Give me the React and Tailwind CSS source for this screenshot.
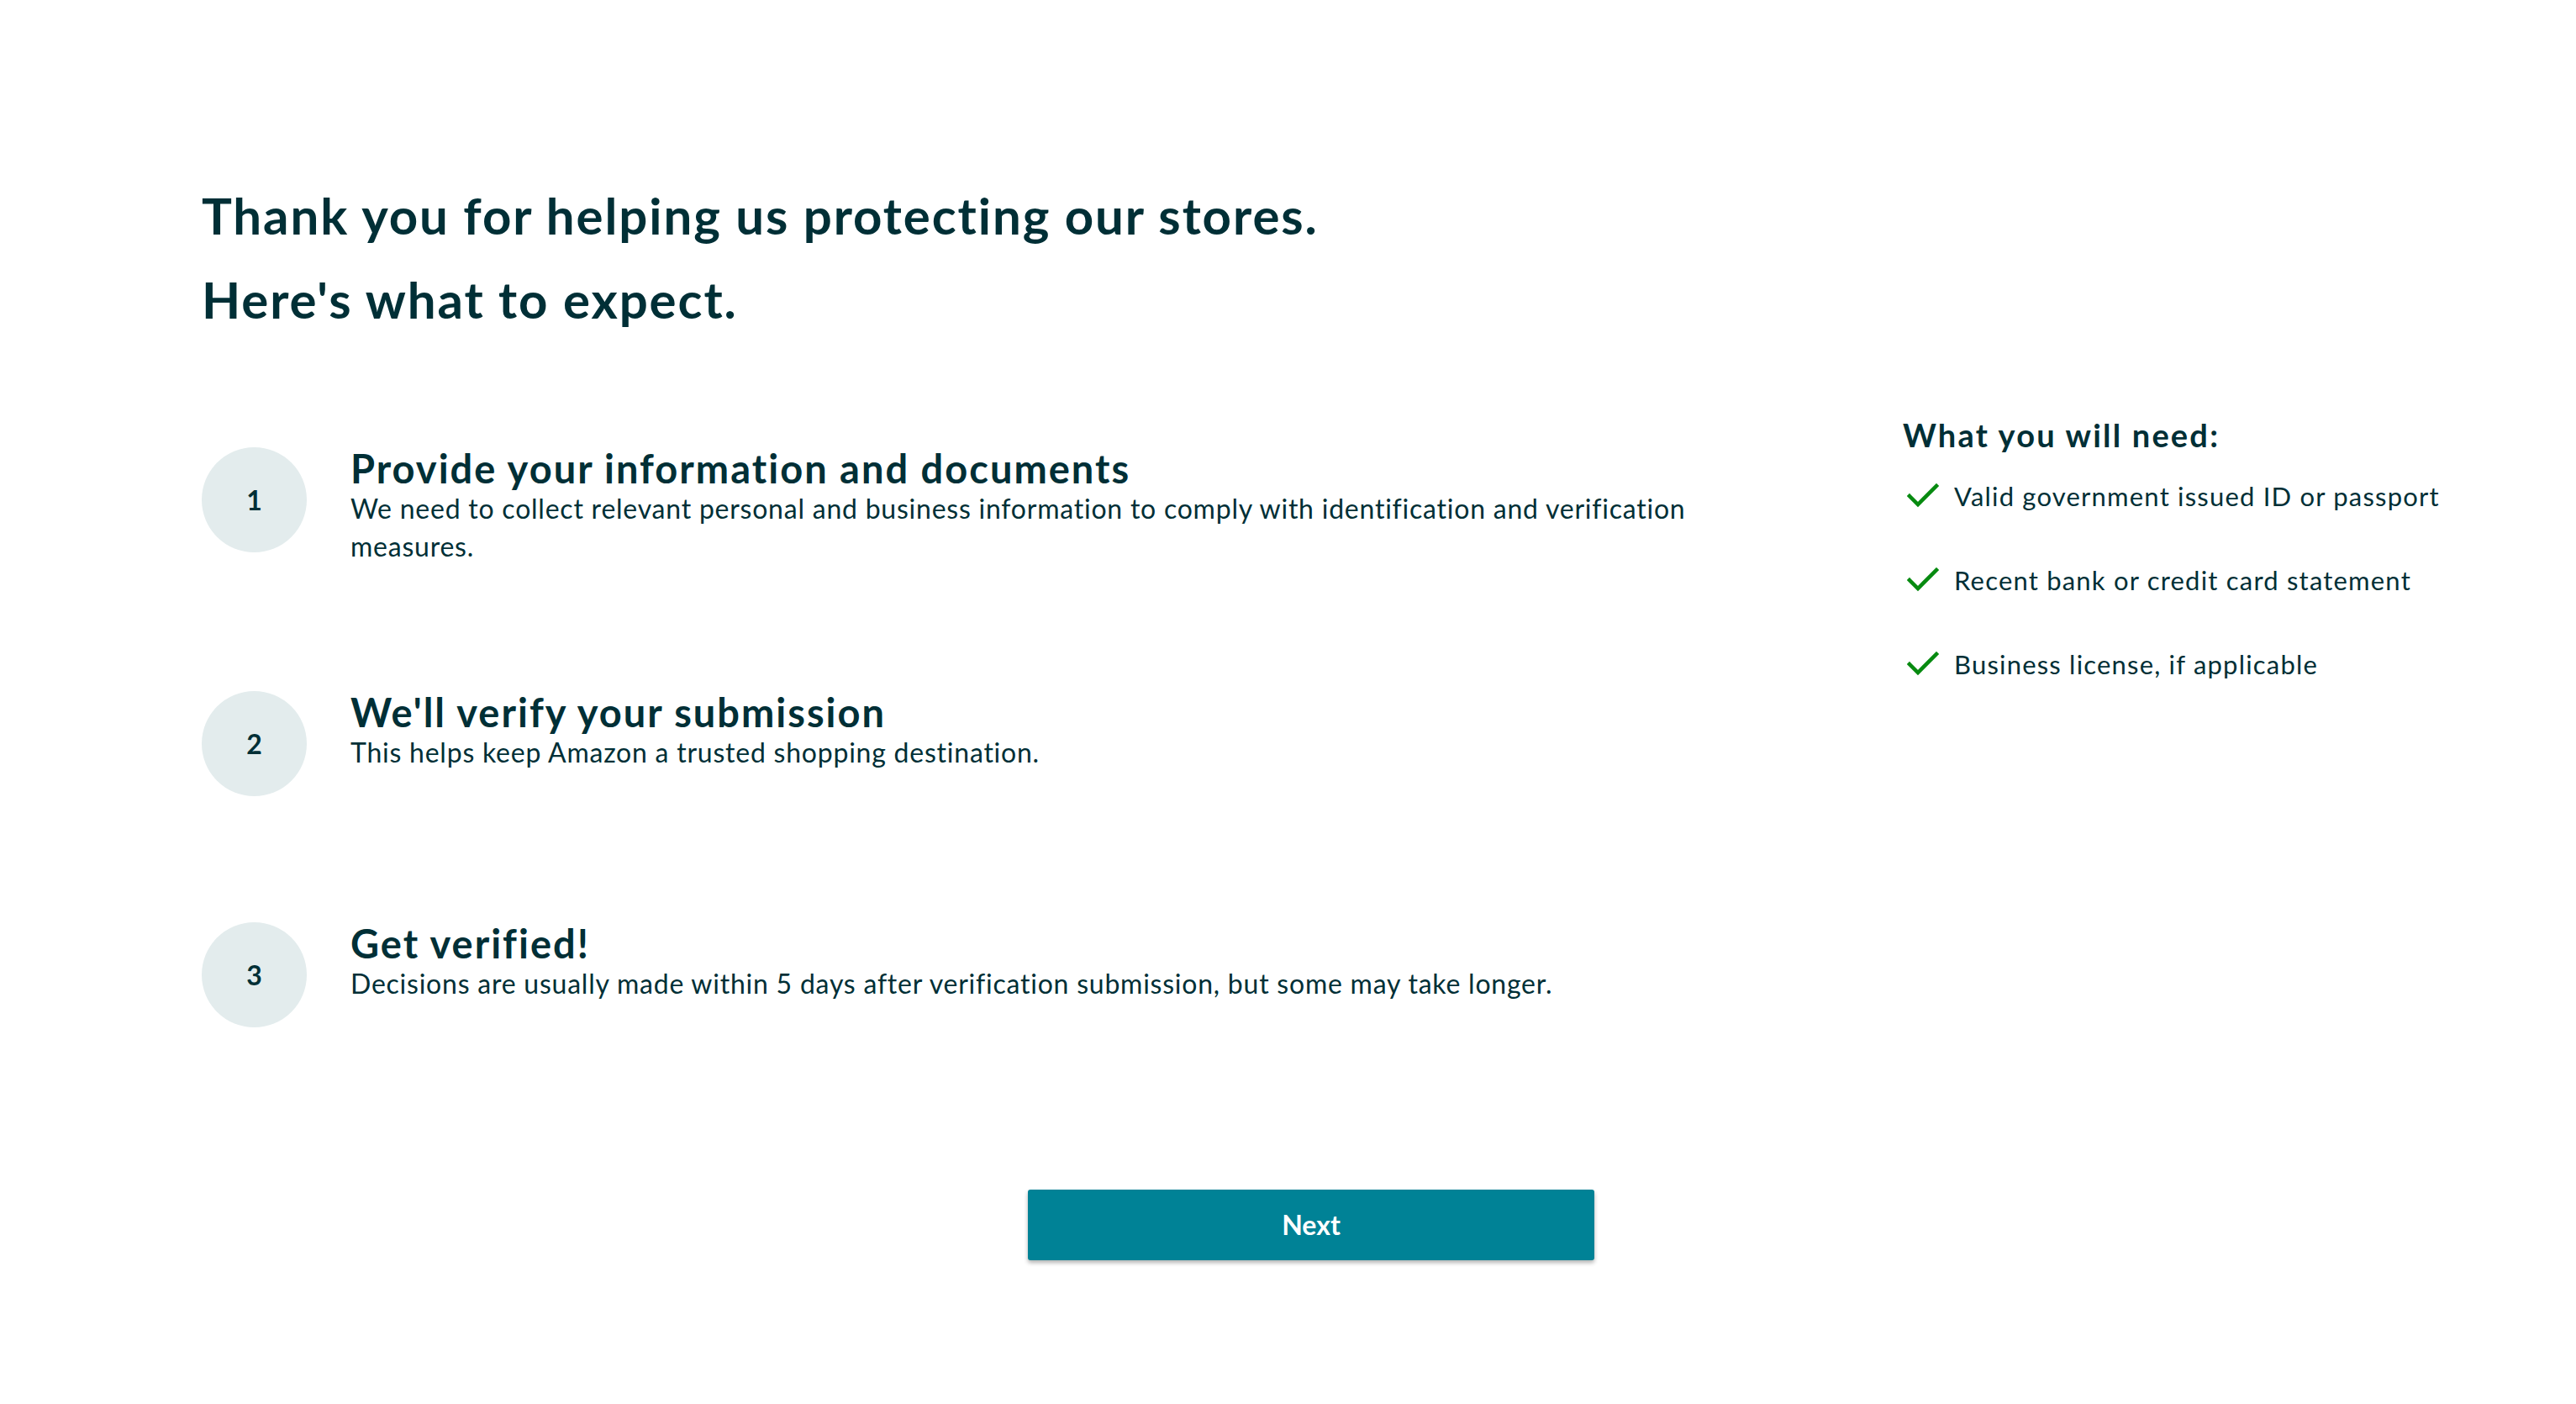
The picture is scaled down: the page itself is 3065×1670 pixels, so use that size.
import React from "react";

const steps = [
  {
    n: "1",
    title: "Provide your information and documents",
    desc: "We need to collect relevant personal and business information to comply with identification and verification measures.",
  },
  {
    n: "2",
    title: "We'll verify your submission",
    desc: "This helps keep Amazon a trusted shopping destination.",
  },
  {
    n: "3",
    title: "Get verified!",
    desc: "Decisions are usually made within 5 days after verification submission, but some may take longer.",
  },
];

const needs = [
  "Valid government issued ID or passport",
  "Recent bank or credit card statement",
  "Business license, if applicable",
];

function Check() {
  return (
    <svg width="40" height="30" viewBox="0 0 40 30" className="shrink-0">
      <path d="M3 15 L13 25 L35 3" fill="none" stroke="#078a10" strokeWidth="4.5" strokeLinecap="square" />
    </svg>
  );
}

export default function App() {
  return (
    <div
      className="min-h-screen w-full bg-white text-[#002f36] pl-[240px] pt-[206px]"
      style={{ fontFamily: "Lato, 'Noto Sans', sans-serif" }}
    >
      <h1 className="text-[60px] font-bold leading-[100px] tracking-[1.9px]">
        <div>Thank you for helping us protecting our stores.</div>
        <div>Here's what to expect.</div>
      </h1>

      <div className="flex items-start mt-[87px]">
        <div className="w-[1880px] shrink-0 pt-[39px] flex flex-col gap-[150px]">
          {steps.map((s) => (
            <div key={s.n} className="flex items-start">
              <div className="w-[125px] h-[125px] shrink-0 rounded-full bg-[#e3eced] flex items-center justify-center text-[32px] font-bold">
                {s.n}
              </div>
              <div className="ml-[52px] flex-1">
                <div className="text-[47px] font-bold leading-[50px] tracking-[2px]">{s.title}</div>
                <div className="text-[32px] leading-[45px] tracking-[0.77px]">{s.desc}</div>
              </div>
            </div>
          ))}
        </div>

        <div className="ml-[144px]">
          <div className="text-[38px] font-bold leading-[48px] tracking-[2.2px]">What you will need:</div>
          <div className="flex flex-col -mt-[1px]">
            {needs.map((t) => (
              <div key={t} className="flex items-center h-[100px]">
                <div className="ml-[5px] mr-[16px]">
                  <Check />
                </div>
                <span className="text-[31px] leading-[40px] tracking-[1.2px]">{t}</span>
              </div>
            ))}
          </div>
        </div>
      </div>

      <button className="block mt-[193px] ml-[983px] w-[674px] h-[84px] rounded-[3px] bg-[#008296] text-white text-[32px] font-bold shadow-[0_3px_5px_rgba(0,0,0,0.3)]">
        Next
      </button>
    </div>
  );
}
